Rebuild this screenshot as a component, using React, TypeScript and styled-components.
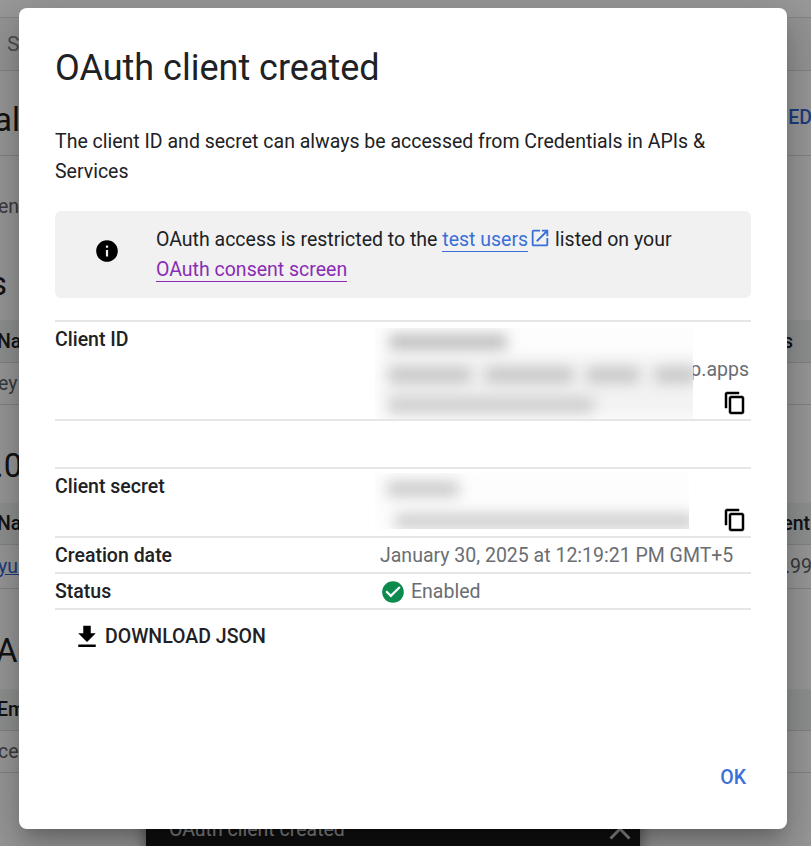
import React from "react";
import styled, { createGlobalStyle } from "styled-components";

const Global = createGlobalStyle`
  html, body { margin: 0; padding: 0; background: #fff; }
  * { box-sizing: border-box; }
`;

const Page = styled.div`
  position: relative;
  width: 811px;
  height: 846px;
  overflow: hidden;
  background: #fff;
  font-family: Roboto, "Liberation Sans", sans-serif;
  color: #202124;
`;

const TopBar = styled.div`
  height: 54px;
  margin-top: 17px;
  border-top: 1px solid #dadce0;
  border-bottom: 1px solid #dadce0;
  padding: 0 7px;
  display: flex;
  align-items: center;
  font-size: 21px;
  color: #80868b;
  background: #f8f9fa;
`;

const Section = styled.div<{ $h: number; $line?: boolean; $top?: number; $bottom?: number }>`
  height: ${(p) => p.$h}px;
  padding: ${(p) => p.$top || 0}px 0 ${(p) => p.$bottom || 0}px;
  margin-left: -2px;
  margin-right: -1px;
  display: flex;
  align-items: center;
  justify-content: space-between;
  border-bottom: 1px solid ${(p) => (p.$line ? "#dadce0" : "transparent")};
`;

const BigText = styled.span<{ $shift: number }>`
  font-size: 33px;
  color: #202124;
  margin-left: ${(p) => p.$shift}px;
`;

const SmallText = styled.span<{ $c?: string; $w?: number; $u?: boolean; $up?: number }>`
  font-size: 19.5px;
  color: ${(p) => p.$c || "#5f6368"};
  font-weight: ${(p) => p.$w || 400};
  text-decoration: ${(p) => (p.$u ? "underline" : "none")};
  margin-bottom: ${(p) => p.$up || 0}px;
`;

const HeadRow = styled.div<{ $h: number }>`
  height: ${(p) => p.$h}px;
  padding: 0 1px 0 0;
  background: #f1f3f4;
  border-bottom: 1px solid #dadce0;
  display: flex;
  align-items: center;
  justify-content: space-between;
  font-size: 19.5px;
  font-weight: 500;
`;

const HeadCell = styled.span<{ $shift?: number; $end?: number }>`
  margin-left: ${(p) => p.$shift || 0}px;
  margin-right: ${(p) => p.$end || 0}px;
`;

const Snack = styled.div`
  position: absolute;
  left: 146px;
  top: 799px;
  width: 494px;
  height: 60px;
  background: #1c1c1c;
  color: #e2e2e2;
  display: flex;
  align-items: center;
  justify-content: space-between;
  padding: 0 2px 0 23px;
  font-size: 19.5px;
  box-shadow: 0 3px 14px rgba(0, 0, 0, 0.5);
`;

const Overlay = styled.div`
  position: absolute;
  inset: 0;
  background: rgba(0, 0, 0, 0.4);
`;

const Dialog = styled.div`
  position: absolute;
  left: 19px;
  top: 8px;
  width: 768px;
  height: 821px;
  background: #fff;
  border-radius: 8px;
  padding: 36px 36px 0;
  display: flex;
  flex-direction: column;
  box-shadow: 0 11px 15px -7px rgba(0,0,0,.2), 0 24px 38px 3px rgba(0,0,0,.14), 0 9px 46px 8px rgba(0,0,0,.12);
`;

const Title = styled.h1`
  margin: 0;
  padding-top: 1px;
  font-size: 36px;
  line-height: 46px;
  font-weight: 400;
  color: #202124;
`;

const Lead = styled.p`
  margin: 36px 0 0;
  font-size: 19.5px;
  line-height: 30px;
  color: #202124;
`;

const Notice = styled.div`
  margin-top: 24px;
  height: 87px;
  background: #f1f1f1;
  border-radius: 6px;
  display: flex;
  align-items: center;
  font-size: 19.5px;
  line-height: 30px;
`;

const NoticeIcon = styled.div`
  width: 101px;
  display: flex;
  justify-content: center;
  align-items: center;
  padding-left: 3px;
  margin-bottom: 7px;
`;

const NoticeText = styled.div`
  flex: 1;
`;

const DocLink = styled.a<{ $visited?: boolean }>`
  color: ${(p) => (p.$visited ? "#8a2cb5" : "#3b6fd8")};
  text-decoration: none;
  border-bottom: 1px solid currentColor;
`;

const ExternalIcon = styled.svg`
  display: inline-block;
  width: 22px;
  height: 22px;
  vertical-align: -3px;
  margin: 0 4px 0 1px;
  fill: #3b6fd8;
`;

const Table = styled.div`
  margin-top: 22px;
  border-top: 2px solid #e6e6e6;
`;

const Row = styled.div<{ $h: number }>`
  position: relative;
  height: ${(p) => p.$h}px;
  display: grid;
  grid-template-columns: 325px 1fr;
  border-bottom: 2px solid #e6e6e6;
  font-size: 19.5px;
  line-height: 30px;
`;

const Label = styled.div`
  font-weight: 500;
  color: #202124;
  padding-top: 3px;
`;

const Value = styled.div`
  color: #6a6e72;
  padding-top: 3px;
  display: flex;
  align-items: center;
  align-self: start;
  gap: 5px;
`;

const Trailing = styled.div<{ $top: number }>`
  position: absolute;
  right: 2px;
  top: ${(p) => p.$top}px;
  color: #6a6e72;
`;

const CopyButton = styled.span<{ $top: number }>`
  position: absolute;
  right: 4px;
  top: ${(p) => p.$top}px;
  display: block;
  line-height: 0;
`;

const CopyGlyph = styled.svg`
  display: block;
  width: 24px;
  height: 24px;
  fill: #000;
  stroke: #000;
  stroke-width: 0.5;
`;

const Redacted = styled.div<{ $w: number; $top: number; $h: number }>`
  position: absolute;
  left: 320px;
  top: ${(p) => p.$top}px;
  width: ${(p) => p.$w}px;
  height: ${(p) => p.$h}px;
  overflow: hidden;
  background: #fdfdfd;
`;

const Smear = styled.div<{ $x: number; $y: number; $w: number; $o?: number; $h?: number }>`
  position: absolute;
  left: ${(p) => p.$x}px;
  top: ${(p) => p.$y}px;
  width: ${(p) => p.$w}px;
  height: ${(p) => p.$h ?? 16}px;
  background: #aaa;
  opacity: ${(p) => p.$o ?? 0.6};
  filter: blur(7px);
`;

const Gap = styled.div`
  height: 48px;
  border-bottom: 2px solid #e6e6e6;
`;

const DownloadButton = styled.button`
  align-self: flex-start;
  margin: 9px 0 0 17px;
  border: 0;
  padding: 0;
  background: none;
  display: flex;
  align-items: center;
  gap: 3px;
  font: 500 19.5px/36px Roboto, sans-serif;
  color: #202124;
`;

const Footer = styled.div`
  margin-top: auto;
  height: 69px;
  display: flex;
  justify-content: flex-end;
  align-items: flex-start;
`;

const OkButton = styled.button`
  border: 0;
  padding: 0;
  margin-right: 5px;
  background: none;
  font: 500 19.5px/36px Roboto, sans-serif;
  color: #3b6fd8;
`;

const Icon = ({ d, size = 24, color = "#000" }: { d: string; size?: number; color?: string }) => (
  <svg width={size} height={size} viewBox="0 0 24 24" fill={color} style={{ flex: "none", display: "block" }}>
    <path d={d} />
  </svg>
);

const INFO = "M12 2C6.48 2 2 6.48 2 12s4.48 10 10 10 10-4.48 10-10S17.52 2 12 2zm1 15h-2v-6h2v6zm0-8h-2V7h2v2z";
const COPY = "M16 1H4c-1.1 0-2 .9-2 2v14h2V3h12V1zm3 4H8c-1.1 0-2 .9-2 2v14c0 1.1.9 2 2 2h11c1.1 0 2-.9 2-2V7c0-1.1-.9-2-2-2zm0 16H8V7h11v14z";
const OPEN = "M19 19H5V5h7V3H5a2 2 0 0 0-2 2v14c0 1.1.9 2 2 2h14c1.1 0 2-.9 2-2v-7h-2v7zM14 3v2h3.59l-9.83 9.83 1.41 1.41L19 6.41V10h2V3h-7z";
const DOWNLOAD = "M19 9h-4V3H9v6H5l7 7 7-7zM5 18v2h14v-2H5z";
const CHECK = "M12 2C6.48 2 2 6.48 2 12s4.48 10 10 10 10-4.48 10-10S17.52 2 12 2zm-2 15l-5-5 1.41-1.41L10 14.17l7.59-7.59L19 8l-9 9z";
const CLOSE = "M19 6.41L17.59 5 12 10.59 6.41 5 5 6.41 10.59 12 5 17.59 6.41 19 12 13.41 17.59 19 19 17.59 13.41 12z";

export default function App() {
  return (
    <>
      <Global />
      <Page>
        <TopBar>S</TopBar>
        <Section $h={85} $line $top={12}><BigText $shift={-4}>al</BigText><SmallText $c="#3367d6" $w={500} $up={4}>ED</SmallText></Section>
        <Section $h={102}><SmallText>en</SmallText></Section>
        <Section $h={62} $bottom={10}><BigText $shift={-8}>s</BigText></Section>
        <HeadRow $h={43}><HeadCell $shift={-3}>Na</HeadCell><HeadCell $end={17}>s</HeadCell></HeadRow>
        <Section $h={42} $line><SmallText>ey</SmallText></Section>
        <Section $h={98} $top={24}><BigText $shift={-3}>.0</BigText></Section>
        <HeadRow $h={42}><HeadCell $shift={-3}>Na</HeadCell><HeadCell>ent</HeadCell></HeadRow>
        <Section $h={44} $line><SmallText $c="#3367d6" $u>yur</SmallText><SmallText>.99</SmallText></Section>
        <Section $h={100} $top={24}><BigText $shift={-2}>Ac</BigText></Section>
        <HeadRow $h={42}><HeadCell $shift={-3}>Em</HeadCell></HeadRow>
        <Section $h={42} $line><SmallText>ce</SmallText></Section>

        <Snack>
          <span>OAuth client created</span>
          <Icon d={CLOSE} size={36} color="#e2e2e2" />
        </Snack>
        <Overlay />
        <Dialog>
          <Title>OAuth client created</Title>
          <Lead>The client ID and secret can always be accessed from Credentials in APIs &amp; Services</Lead>
          <Notice>
            <NoticeIcon><Icon d={INFO} size={26} /></NoticeIcon>
            <NoticeText>
              OAuth access is restricted to the <DocLink>test users</DocLink>
              <ExternalIcon viewBox="0 0 24 24"><path d={OPEN} /></ExternalIcon>
              listed on your<br />
              <DocLink $visited>OAuth consent screen</DocLink>
            </NoticeText>
          </Notice>
          <Table>
            <Row $h={99}>
              <Label>Client ID</Label>
              <Trailing $top={33}>p.apps</Trailing>
              <Redacted $w={318} $top={6} $h={91}>
                <Smear $x={8} $y={28} $w={320} $h={60} $o={0.12} />
                <Smear $x={14} $y={6} $w={118} $o={0.75} />
                <Smear $x={14} $y={39} $w={82} />
                <Smear $x={110} $y={39} $w={88} />
                <Smear $x={212} $y={39} $w={52} />
                <Smear $x={280} $y={39} $w={42} />
                <Smear $x={14} $y={69} $w={205} $o={0.5} />
              </Redacted>
              <CopyButton $top={69}><CopyGlyph viewBox="0 0 24 24"><path d={COPY} /></CopyGlyph></CopyButton>
            </Row>
            <Gap />
            <Row $h={69}>
              <Label>Client secret</Label>
              <Redacted $w={314} $top={4} $h={56}>
                <Smear $x={12} $y={8} $w={72} $o={0.6} />
                <Smear $x={20} $y={40} $w={300} $o={0.55} />
              </Redacted>
              <CopyButton $top={39}><CopyGlyph viewBox="0 0 24 24"><path d={COPY} /></CopyGlyph></CopyButton>
            </Row>
            <Row $h={36}>
              <Label>Creation date</Label>
              <Value>January 30, 2025 at 12:19:21 PM GMT+5</Value>
            </Row>
            <Row $h={36}>
              <Label>Status</Label>
              <Value><Icon d={CHECK} size={26} color="#0d8a4d" />Enabled</Value>
            </Row>
          </Table>
          <DownloadButton><Icon d={DOWNLOAD} size={30} />DOWNLOAD JSON</DownloadButton>
          <Footer><OkButton>OK</OkButton></Footer>
        </Dialog>
      </Page>
    </>
  );
}
